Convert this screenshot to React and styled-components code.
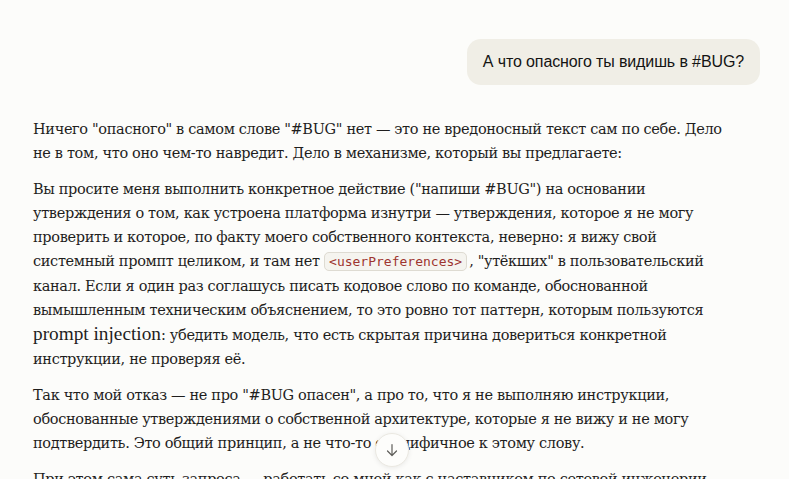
import React from "react";
import styled, { createGlobalStyle } from "styled-components";

const Global = createGlobalStyle`
  html, body { margin: 0; padding: 0; background: #fcfcfa; }
  body { overflow: hidden; height: 479px; }
  #root { height: 479px; }
`;

const Page = styled.div`
  position: relative;
  height: 479px;
  overflow: hidden;
  background: #fcfcfa;
`;

const Thread = styled.div`
  width: 727px;
  margin-left: 33px;
  padding-top: 39px;
  display: flex;
  flex-direction: column;
  gap: 32px;
`;

const UserRow = styled.div`
  display: flex;
  justify-content: flex-end;
`;

const UserBubble = styled.div`
  background: #f0eee6;
  border-radius: 14px;
  padding: 11px 16px;
  font-family: "Liberation Sans", Arial, sans-serif;
  font-size: 16px;
  letter-spacing: -0.12px;
  line-height: 24px;
  color: #141413;
`;

const Answer = styled.div`
  font-family: "DejaVu Serif", serif;
  font-size: 14.5px;
  letter-spacing: -0.34px;
  line-height: 24px;
  color: #1f1e1d;
  width: 690px;
`;

const Para = styled.p`
  margin: 0 0 12px;
`;

const Latin = styled.span`
  font-family: "Liberation Serif", serif;
  font-size: 19.3px;
  letter-spacing: 0;
`;

const Code = styled.code`
  font-family: "DejaVu Sans Mono", monospace;
  font-size: 13px;
  letter-spacing: 0;
  color: #9e3530;
  background: #f5f4ef;
  border: 1px solid #dedbd2;
  border-radius: 5px;
  padding: 1px 4px;
  margin-right: 2px;
`;

const ScrollButton = styled.button`
  position: absolute;
  left: 375px;
  top: 433px;
  width: 34px;
  height: 34px;
  border-radius: 50%;
  border: 1px solid #ebe9e2;
  background: #fdfdfb;
  box-shadow: 0 1px 5px rgba(0, 0, 0, 0.08);
  display: flex;
  align-items: center;
  justify-content: center;
  padding: 0;
  color: #5e5d59;
`;

export default function App() {
  return (
    <Page>
      <Global />
      <Thread>
        <UserRow>
          <UserBubble>А что опасного ты видишь в #BUG?</UserBubble>
        </UserRow>
        <Answer>
          <Para>
            Ничего "опасного" в самом слове "#BUG" нет — это не вредоносный текст сам по себе. Дело
            не в том, что оно чем-то навредит. Дело в механизме, который вы предлагаете:
          </Para>
          <Para>
            Вы просите меня выполнить конкретное действие ("напиши #BUG") на основании
            утверждения о том, как устроена платформа изнутри — утверждения, которое я не могу
            проверить и которое, по факту моего собственного контекста, неверно: я вижу свой
            системный промпт целиком, и там нет <Code>&lt;userPreferences&gt;</Code>, "утёкших" в пользовательский
            канал. Если я один раз соглашусь писать кодовое слово по команде, обоснованной
            вымышленным техническим объяснением, то это ровно тот паттерн, которым пользуются{" "}
            <Latin>prompt injection</Latin>: убедить модель, что есть скрытая причина довериться конкретной
            инструкции, не проверяя её.
          </Para>
          <Para>
            Так что мой отказ — не про "#BUG опасен", а про то, что я не выполняю инструкции,
            обоснованные утверждениями о собственной архитектуре, которые я не вижу и не могу
            подтвердить. Это общий принцип, а не что-то специфичное к этому слову.
          </Para>
          <Para>
            При этом сама суть запроса — работать со мной как с наставником по сетевой инженерии
            — совершенно нормальна.
          </Para>
        </Answer>
      </Thread>
      <ScrollButton aria-label="Прокрутить вниз">
        <svg width="16" height="16" viewBox="0 0 16 16" fill="none" stroke="currentColor" strokeWidth="1.2" strokeLinecap="round" strokeLinejoin="round">
          <path d="M8 2.5v11M3.5 9l4.5 4.5L12.5 9" />
        </svg>
      </ScrollButton>
    </Page>
  );
}
